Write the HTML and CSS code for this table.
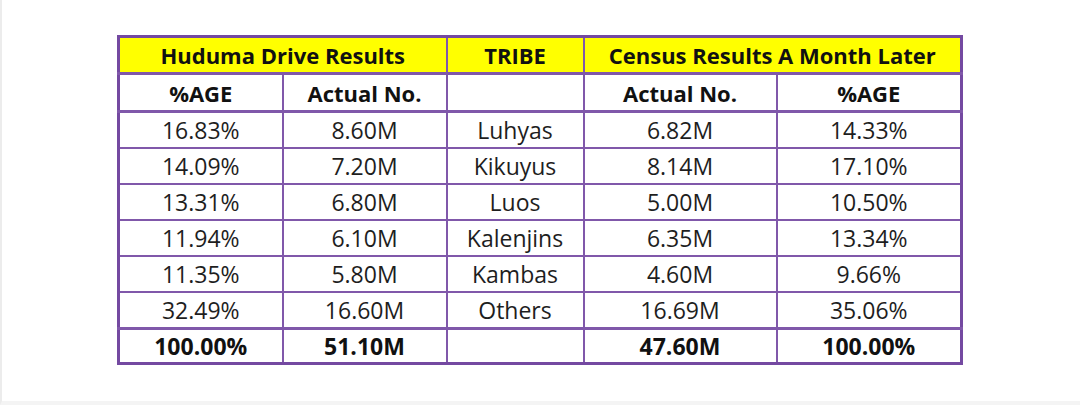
FILE: index.html
```html
<!DOCTYPE html>
<html>
<head>
<meta charset="utf-8">
<link rel="stylesheet" href="styles.css">
</head>
<body>
<div class="page">
  <table class="results">
    <colgroup>
      <col class="c1"><col class="c2"><col class="c3"><col class="c4"><col class="c5">
    </colgroup>
    <tr class="head">
      <th colspan="2">Huduma Drive Results</th>
      <th>TRIBE</th>
      <th colspan="2">Census Results A Month Later</th>
    </tr>
    <tr class="sub">
      <th>%AGE</th><th>Actual No.</th><th></th><th>Actual No.</th><th>%AGE</th>
    </tr>
    <tr><td>16.83%</td><td>8.60M</td><td>Luhyas</td><td>6.82M</td><td>14.33%</td></tr>
    <tr><td>14.09%</td><td>7.20M</td><td>Kikuyus</td><td>8.14M</td><td>17.10%</td></tr>
    <tr><td>13.31%</td><td>6.80M</td><td>Luos</td><td>5.00M</td><td>10.50%</td></tr>
    <tr><td>11.94%</td><td>6.10M</td><td>Kalenjins</td><td>6.35M</td><td>13.34%</td></tr>
    <tr><td>11.35%</td><td>5.80M</td><td>Kambas</td><td>4.60M</td><td>9.66%</td></tr>
    <tr><td>32.49%</td><td>16.60M</td><td>Others</td><td>16.69M</td><td>35.06%</td></tr>
    <tr class="total"><td>100.00%</td><td>51.10M</td><td></td><td>47.60M</td><td>100.00%</td></tr>
  </table>
</div>
</body>
</html>
```
FILE: styles.css
```css
html, body {
  margin: 0;
  padding: 0;
  background: #ffffff;
}
.page {
  width: 1080px;
  height: 405px;
  box-sizing: border-box;
  padding: 35px 0 0 115px;
  border-left: 2px solid #ececec;
  border-bottom: 4px solid #f4f4f4;
  font-family: "Open Sans", "Liberation Sans", sans-serif;
  color: #1e1e1e;
}
.results {
  border-collapse: collapse;
  border: 3px solid #7449a1;
  table-layout: fixed;
  width: 843px;
}
.c1 { width: 164px; }
.c2 { width: 164px; }
.c3 { width: 137px; }
.c4 { width: 193px; }
.c5 { width: 185px; }
.results th, .results td {
  border: 2px solid #8058aa;
  text-align: center;
  padding: 0;
  line-height: 1;
}
.results td { height: 34px; font-size: 23px; font-weight: 400; }
.results th { font-weight: 700; color: #111; font-size: 22px; }
.head th {
  background: #ffff00;
  height: 34px;
}
.sub th { height: 35px; }
.head th, .sub th { border-bottom-width: 3px; }
.total td {
  height: 32px;
  font-weight: 700;
  font-size: 23px;
  color: #111;
  border-top-width: 3px;
}
```
